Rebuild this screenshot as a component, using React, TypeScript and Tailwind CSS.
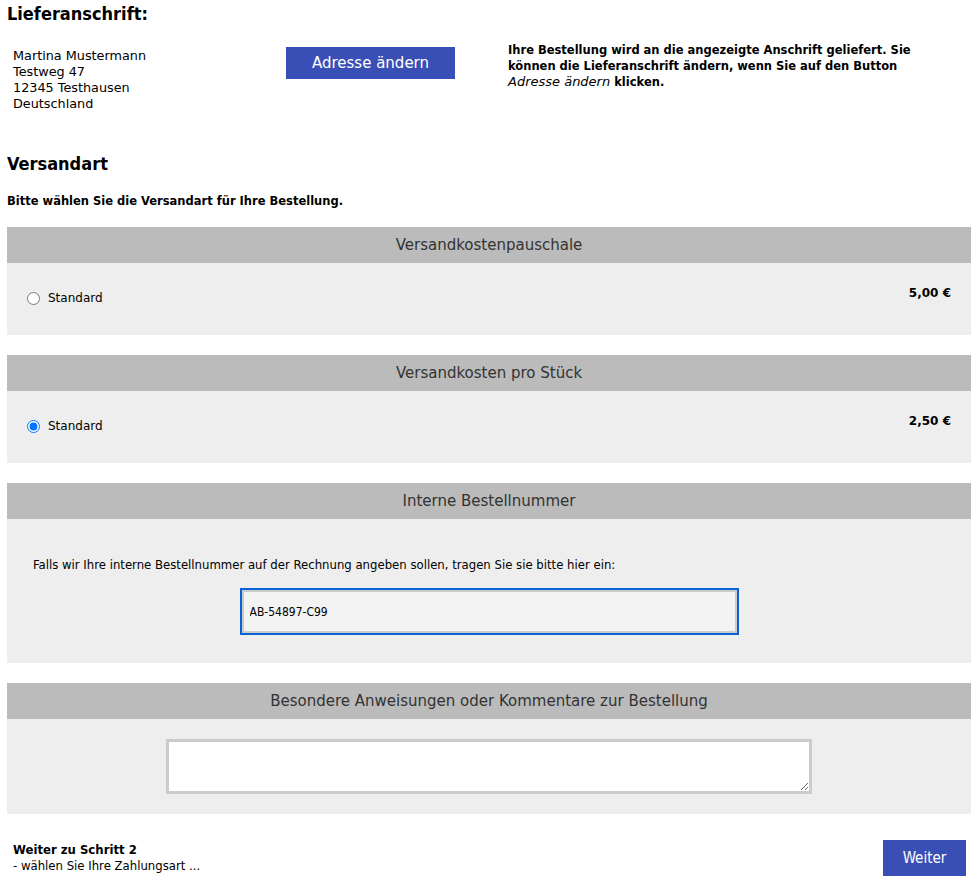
import React, { useState } from 'react'

const font = "font-['DejaVu_Sans_Condensed','DejaVu_Sans',sans-serif]"
const wide = "font-['DejaVu_Sans','Verdana',sans-serif]"

function Section({ title, children }: { title: string, children: React.ReactNode }) {
  return (
    <div className="mb-[20px] bg-[#eeeeee]">
      <div className={`${wide} h-[36px] bg-[#bbbbbb] flex items-center justify-center text-[15px] text-[#333333]`}>
        {title}
      </div>
      {children}
    </div>
  )
}

function ShippingOption({ name, price, checked, onSelect }: { name: string, price: string, checked: boolean, onSelect: () => void }) {
  return (
    <div className={`${wide} h-[72px] flex justify-between px-[20px]`}>
      <label className="flex items-center gap-[8px] text-[12px] text-black h-[70px]">
        <input type="radio" name="versand" checked={checked} onChange={onSelect} className="m-0 w-[13px] h-[13px]" />
        {name}
      </label>
      <div className="pt-[21px] text-[12px] font-bold text-black">{price}</div>
    </div>
  )
}

export default function App() {
  const [versand, setVersand] = useState('stueck')
  const [nummer, setNummer] = useState('AB-54897-C99')

  return (
    <div className={`${font} w-[976px] bg-white text-black pl-[7px] pr-[5px] pb-[7px]`}>
      <h1 className="text-[18px] font-bold leading-[22px] pt-[3px]">Lieferanschrift:</h1>

      {/** Address */}
      <div className="mt-[17px] flex">
        <div className={`${wide} w-[279px] pl-[6px] pt-[6px] text-[12.8px] leading-[16px]`}>
          <div>Martina Mustermann</div>
          <div>Testweg 47</div>
          <div>12345 Testhausen</div>
          <div>Deutschland</div>
        </div>
        <div className="w-[222px] pt-[5px]">
          <button className={`${wide} w-[169px] h-[32px] bg-[#3a4fb5] text-white text-[15px]`}>Adresse ändern</button>
        </div>
        <p className={`${wide} w-[420px] text-[11.5px] font-bold leading-[16px]`}>
          Ihre Bestellung wird an die angezeigte Anschrift geliefert. Sie können die Lieferanschrift ändern, wenn Sie auf den Button <i className="font-normal text-[13px]">Adresse ändern</i> klicken.
        </p>
      </div>

      <h2 className="mt-[41px] text-[18px] font-bold leading-[22px]">Versandart</h2>
      <p className={`${wide} mt-[18px] text-[11.5px] font-bold leading-[16px] mb-[18px]`}>Bitte wählen Sie die Versandart für Ihre Bestellung.</p>

      <Section title="Versandkostenpauschale">
        <ShippingOption name="Standard" price="5,00 €" checked={versand === 'pauschal'} onSelect={() => setVersand('pauschal')} />
      </Section>

      <Section title="Versandkosten pro Stück">
        <ShippingOption name="Standard" price="2,50 €" checked={versand === 'stueck'} onSelect={() => setVersand('stueck')} />
      </Section>

      <Section title="Interne Bestellnummer">
        <div className="h-[144px] pt-[38px]">
          <p className="pl-[26px] text-[13px] leading-[16px]">Falls wir Ihre interne Bestellnummer auf der Rechnung angeben sollen, tragen Sie sie bitte hier ein:</p>
          <div className="mt-[15px] flex justify-center">
            <input
              value={nummer}
              onChange={(e) => setNummer(e.target.value)}
              className="w-[499px] h-[47px] bg-[#f3f3f3] border-2 border-[#0b62d6] shadow-[inset_0_0_0_2px_#cccccc] outline-none px-[8px] text-[12px] text-black"
            />
          </div>
        </div>
      </Section>

      <Section title="Besondere Anweisungen oder Kommentare zur Bestellung">
        <div className="h-[95px] flex justify-center pt-[20px]">
          <textarea className="w-[646px] h-[55px] bg-white border-[3px] border-[#cccccc] outline-none" />
        </div>
      </Section>

      {/** Footer */}
      <div className="flex justify-between items-center pl-[6px] pr-[5px] mt-[26px]">
        <div className="text-[13px] leading-[16px]">
          <div className="font-bold">Weiter zu Schritt 2</div>
          <div>- wählen Sie Ihre Zahlungsart ...</div>
        </div>
        <button className="w-[83px] h-[36px] bg-[#3a4fb5] text-white text-[15px]">Weiter</button>
      </div>
    </div>
  )
}
